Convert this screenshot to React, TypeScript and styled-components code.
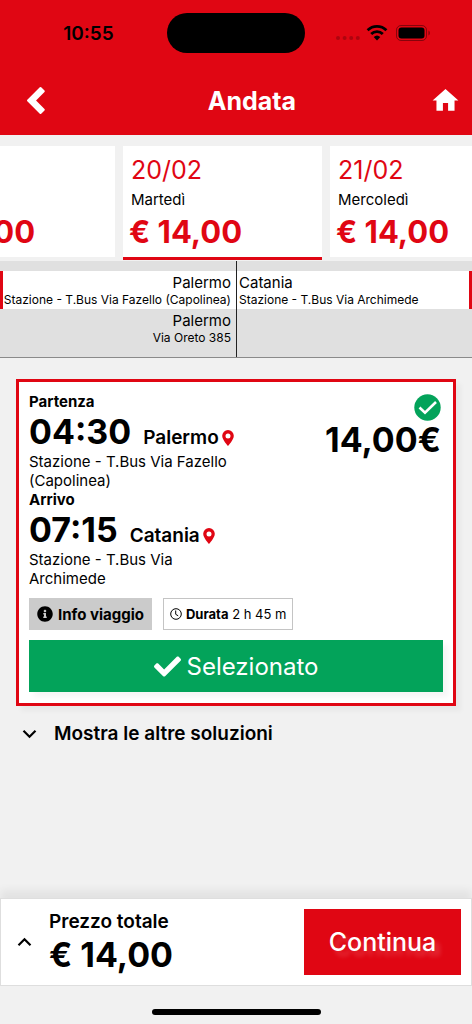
import React from "react";
import styled, { createGlobalStyle } from "styled-components";
import { FaCheck, FaInfoCircle } from "react-icons/fa";
import { MdHome } from "react-icons/md";

const RED = "#e00613";
const GREEN = "#03a35a";
const PAGE = "#f1f1f1";

const GlobalStyle = createGlobalStyle`
  *, *::before, *::after { box-sizing: border-box; }
  body {
    margin: 0;
    background: ${PAGE};
    color: #000;
    font-family: Inter, "Liberation Sans", sans-serif;
  }
  button { font: inherit; color: inherit; border: 0; margin: 0; padding: 0; background: none; cursor: pointer; }
  a { color: inherit; text-decoration: none; }
  h1, p, dl, dd, ul { margin: 0; padding: 0; }
  svg { display: block; flex: none; }
`;

const Screen = styled.div`
  min-height: 100vh;
  display: flex;
  flex-direction: column;
`;

const Header = styled.header`
  background: ${RED};
`;

const StatusBar = styled.div`
  display: grid;
  grid-template-columns: 1fr 138px 1fr;
  align-items: center;
  height: 66px;
`;

const Clock = styled.time`
  padding-left: 10px;
  text-align: center;
  font-size: 19px;
  font-weight: 600;
`;

const Island = styled.div`
  height: 40px;
  border-radius: 20px;
  background: #000;
`;

const StatusIcons = styled.div`
  display: flex;
  justify-content: flex-end;
  padding-right: 41px;
`;

const NavBar = styled.div`
  display: grid;
  grid-template-columns: 74px 1fr 42px;
  align-items: center;
  height: 69px;
  color: #fff;
`;

const NavLink = styled.a<{ $inset?: number }>`
  padding-left: ${(p) => p.$inset ?? 0}px;
`;

const Title = styled.h1`
  text-align: center;
  font-size: 25px;
  line-height: 30px;
  font-weight: 700;
`;

const DateStrip = styled.div`
  overflow: hidden;
  padding: 11px 0 1px;
`;

const DateList = styled.ul`
  display: flex;
  gap: 8px;
  margin-left: -84px;
  list-style: none;
`;

const DateCard = styled.button<{ $selected?: boolean }>`
  display: block;
  width: 199px;
  padding: 8px 8px 7px;
  background: #fff;
  background-clip: padding-box;
  border-bottom: 3px solid ${(p) => (p.$selected ? RED : "transparent")};
  text-align: left;
`;

const DateLabel = styled.span`
  display: block;
  color: ${RED};
  font-size: 25px;
  line-height: 32px;
`;

const DayLabel = styled.span`
  display: block;
  font-size: 15px;
  line-height: 28px;
`;

const DatePrice = styled.span`
  display: block;
  margin-left: -2px;
  color: ${RED};
  font-size: 31px;
  line-height: 36px;
  font-weight: 700;
`;

const Stops = styled.section`
  display: grid;
  grid-template-columns: 1fr 1fr;
  background: #e0e0e0;
  border-bottom: 1px solid #8a8a8a;
`;

const StopColumn = styled.div<{ $side: "from" | "to" }>`
  padding: 10px 0;
  text-align: ${(p) => (p.$side === "from" ? "right" : "left")};
  border-left: ${(p) => (p.$side === "to" ? "1px solid #222" : "0")};
`;

const Stop = styled.button<{ $side: "from" | "to"; $selected?: boolean }>`
  display: block;
  width: 100%;
  padding: ${(p) => (p.$side === "from" ? "3px 5px 2px 0" : "3px 0 2px 2px")};
  text-align: inherit;
  white-space: nowrap;
  background: ${(p) => (p.$selected ? "#fff" : "transparent")};
  border-style: solid;
  border-color: ${(p) => (p.$selected ? RED : "transparent")};
  border-width: ${(p) => (p.$side === "from" ? "0 0 0 3px" : "0 3px 0 0")};
`;

const StopCity = styled.span`
  display: block;
  font-size: 15px;
  line-height: 18px;
`;

const StopName = styled.span`
  display: block;
  font-size: 12px;
  line-height: 15px;
`;

const Main = styled.main`
  flex: 1;
  padding: 21px 16px 20px;
`;

const Solution = styled.article`
  padding: 10px 10px 11px;
  background: #fff;
  border: 3px solid ${RED};
  box-shadow: 5px 5px 5px rgba(0, 0, 0, 0.04);
`;

const SolutionTop = styled.div`
  display: grid;
  grid-template-columns: 1fr 1fr;
`;

const LegLabel = styled.p`
  font-size: 15px;
  line-height: 19px;
  font-weight: 700;
`;

const LegRow = styled.p`
  display: flex;
  align-items: baseline;
  gap: 12px;
  line-height: 41px;
  white-space: nowrap;
`;

const LegTime = styled.time`
  font-size: 34px;
  font-weight: 700;
`;

const LegCity = styled.span`
  display: flex;
  align-items: center;
  gap: 3px;
  font-size: 19px;
  line-height: 24px;
  font-weight: 600;
`;

const Address = styled.p`
  font-size: 15px;
  line-height: 19px;
`;

const Fare = styled.div`
  display: flex;
  flex-direction: column;
  align-items: flex-end;
  padding: 2px 2px 0 0;
`;

const FareAmount = styled.strong`
  font-size: 34px;
  line-height: 38px;
  font-weight: 700;
`;

const Chips = styled.div`
  display: flex;
  gap: 11px;
  margin: 10px 0;
`;

const InfoButton = styled.button`
  display: flex;
  align-items: center;
  gap: 5px;
  height: 32px;
  padding: 0 8px;
  background: #cbcbcb;
  font-size: 15px;
  font-weight: 700;
`;

const Duration = styled.p`
  display: flex;
  align-items: center;
  gap: 4px;
  height: 32px;
  padding: 0 6px;
  border: 1px solid #c4c4c4;
  font-size: 13px;
`;

const SelectButton = styled.button`
  display: flex;
  align-items: center;
  justify-content: center;
  gap: 6px;
  width: 100%;
  height: 52px;
  background: ${GREEN};
  color: #fff;
  font-size: 24px;
  box-shadow: 5px 5px 5px rgba(0, 0, 0, 0.04);
`;

const MoreButton = styled.button`
  display: flex;
  align-items: center;
  gap: 17px;
  margin-top: 16px;
  padding-left: 6px;
  font-size: 19px;
  line-height: 24px;
  font-weight: 600;
`;

const Footer = styled.footer`
  display: flex;
  align-items: center;
  height: 88px;
  padding: 0 10px 0 16px;
  background: #fff;
  border: 1px solid #dedede;
  box-shadow: 0 -8px 8px rgba(0, 0, 0, 0.06);
`;

const Total = styled.dl`
  flex: 1;
  padding-left: 17px;
`;

const TotalLabel = styled.dt`
  font-size: 19px;
  line-height: 26px;
  font-weight: 600;
`;

const TotalAmount = styled.dd`
  font-size: 34px;
  line-height: 40px;
  font-weight: 700;
`;

const ContinueButton = styled.button`
  width: 157px;
  height: 66px;
  background: ${RED};
  color: #fff;
  font-size: 25px;
  font-weight: 500;
  text-shadow: 5px 5px 5px rgba(255, 255, 255, 0.2);
`;

const HomeArea = styled.div`
  display: flex;
  justify-content: center;
  height: 38px;
  padding-top: 23px;
`;

const HomeIndicator = styled.div`
  width: 169px;
  height: 6px;
  border-radius: 3px;
  background: #000;
`;

const dates = [
  { date: "19/02", day: "Lunedì", price: "€ 14,00" },
  { date: "20/02", day: "Martedì", price: "€ 14,00", selected: true },
  { date: "21/02", day: "Mercoledì", price: "€ 14,00" },
];

const departures = [
  { city: "Palermo", name: "Stazione - T.Bus Via Fazello (Capolinea)", selected: true },
  { city: "Palermo", name: "Via Oreto 385" },
];

const arrivals = [{ city: "Catania", name: "Stazione - T.Bus Via Archimede", selected: true }];

const legs = [
  { label: "Partenza", time: "04:30", city: "Palermo", address: "Stazione - T.Bus Via Fazello (Capolinea)" },
  { label: "Arrivo", time: "07:15", city: "Catania", address: "Stazione - T.Bus Via Archimede" },
];

const SignalGlyphs = () => (
  <svg width="98" height="18" viewBox="0 0 98 18" aria-hidden="true">
    <g fill="#000" opacity="0.22">
      <circle cx="5" cy="14" r="2" />
      <circle cx="11.6" cy="14" r="2" />
      <circle cx="18.2" cy="14" r="2" />
      <circle cx="24.8" cy="14" r="2" />
    </g>
    <g fill="none" stroke="#000" strokeWidth="2.8">
      <path d="M34.6 6.2a13.4 13.4 0 0 1 18.8 0" />
      <path d="M38.2 10a8.2 8.2 0 0 1 11.6 0" />
    </g>
    <path d="M44 16.4l-3.3-3.3a4.8 4.8 0 0 1 6.6 0z" />
    <rect x="63.5" y="1.5" width="30" height="15" rx="4.5" fill="none" stroke="#000" strokeOpacity="0.4" />
    <rect x="65.5" y="3.5" width="26" height="11" rx="3" />
    <path d="M95.5 6.5v5c1.8-.8 1.8-4.2 0-5z" opacity="0.45" />
  </svg>
);

const BackGlyph = () => (
  <svg width="20" height="30" viewBox="0 0 20 30" fill="#fff" stroke="#fff" strokeWidth="2" strokeLinejoin="round" aria-hidden="true">
    <path d="M2 14.500L14.500 2l3.300 3.300-9.200 9.200 9.200 9.200-3.300 3.300z" />
  </svg>
);

const Pin = () => (
  <svg width="12" height="16" viewBox="0 0 12 16" fill={RED} fillRule="evenodd" aria-hidden="true">
    <path d="M6 0a5.800 5.800 0 0 0-5.800 5.800C.2 10 6 16 6 16s5.800-6 5.800-10.200A5.800 5.800 0 0 0 6 0zm0 3.500a2.500 2.500 0 1 1 0 5 2.500 2.500 0 0 1 0-5z" />
  </svg>
);

const SelectedBadge = () => (
  <svg width="27" height="27" viewBox="0 0 27 27" role="img" aria-label="Selezionato">
    <circle cx="13.5" cy="13.5" r="13.2" fill={GREEN} />
    <path d="M5.500 13.500l5.500 5.200L22 8" fill="none" stroke="#fff" strokeWidth="2.600" />
  </svg>
);

const ClockGlyph = () => (
  <svg width="12" height="12" viewBox="0 0 12 12" fill="none" stroke="#000" aria-hidden="true">
    <circle cx="6" cy="6" r="5.3" />
    <path d="M5.7 2.5v3.8l2.5 1.5" />
  </svg>
);

const Chevron = ({ up }: { up?: boolean }) => (
  <svg width="15" height="10" viewBox="0 0 15 10" fill="none" stroke="#000" strokeWidth="2.2" aria-hidden="true">
    <path d={up ? "M1.5 8.2l6-6 6 6" : "M1.5 1.8l6 6 6-6"} />
  </svg>
);

export default function App() {
  return (
    <Screen>
      <GlobalStyle />
      <Header>
        <StatusBar>
          <Clock>10:55</Clock>
          <Island />
          <StatusIcons>
            <SignalGlyphs />
          </StatusIcons>
        </StatusBar>
        <NavBar>
          <NavLink href="#back" aria-label="Indietro" $inset={26}>
            <BackGlyph />
          </NavLink>
          <Title>Andata</Title>
          <NavLink href="#home" aria-label="Home">
            <MdHome size={31} />
          </NavLink>
        </NavBar>
      </Header>

      <DateStrip>
        <DateList>
          {dates.map((d) => (
            <li key={d.date}>
              <DateCard type="button" $selected={d.selected} aria-pressed={!!d.selected}>
                <DateLabel>{d.date}</DateLabel>
                <DayLabel>{d.day}</DayLabel>
                <DatePrice>{d.price}</DatePrice>
              </DateCard>
            </li>
          ))}
        </DateList>
      </DateStrip>

      <Stops>
        <StopColumn $side="from">
          {departures.map((s) => (
            <Stop key={s.name} type="button" $side="from" $selected={s.selected}>
              <StopCity>{s.city}</StopCity>
              <StopName>{s.name}</StopName>
            </Stop>
          ))}
        </StopColumn>
        <StopColumn $side="to">
          {arrivals.map((s) => (
            <Stop key={s.name} type="button" $side="to" $selected={s.selected}>
              <StopCity>{s.city}</StopCity>
              <StopName>{s.name}</StopName>
            </Stop>
          ))}
        </StopColumn>
      </Stops>

      <Main>
        <Solution>
          <SolutionTop>
            <div>
              {legs.map((leg) => (
                <React.Fragment key={leg.label}>
                  <LegLabel>{leg.label}</LegLabel>
                  <LegRow>
                    <LegTime>{leg.time}</LegTime>
                    <LegCity>
                      {leg.city}
                      <Pin />
                    </LegCity>
                  </LegRow>
                  <Address>{leg.address}</Address>
                </React.Fragment>
              ))}
            </div>
            <Fare>
              <SelectedBadge />
              <FareAmount>14,00€</FareAmount>
            </Fare>
          </SolutionTop>
          <Chips>
            <InfoButton type="button">
              <FaInfoCircle size={16} />
              Info viaggio
            </InfoButton>
            <Duration>
              <ClockGlyph />
              <span>
                <b>Durata</b> 2 h 45 m
              </span>
            </Duration>
          </Chips>
          <SelectButton type="button">
            <FaCheck size={27} />
            Selezionato
          </SelectButton>
        </Solution>
        <MoreButton type="button">
          <Chevron />
          Mostra le altre soluzioni
        </MoreButton>
      </Main>

      <Footer>
        <button type="button" aria-label="Dettagli prezzo">
          <Chevron up />
        </button>
        <Total>
          <TotalLabel>Prezzo totale</TotalLabel>
          <TotalAmount>€ 14,00</TotalAmount>
        </Total>
        <ContinueButton type="button">Continua</ContinueButton>
      </Footer>
      <HomeArea>
        <HomeIndicator />
      </HomeArea>
    </Screen>
  );
}
